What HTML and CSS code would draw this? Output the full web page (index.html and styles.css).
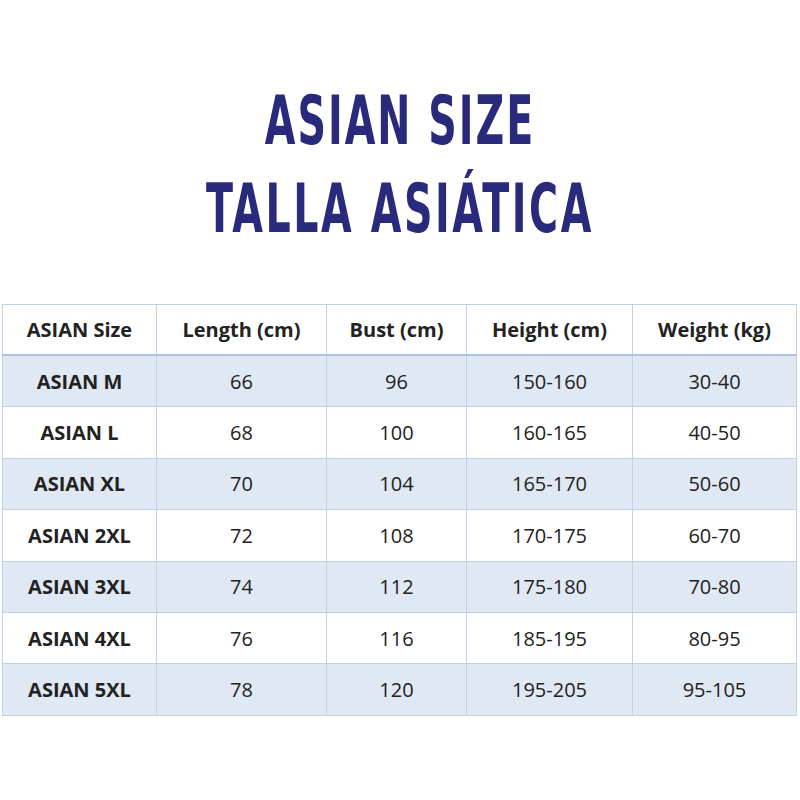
FILE: index.html
```html
<!DOCTYPE html>
<html>
<head>
<meta charset="utf-8">
<link rel="stylesheet" href="styles.css">
</head>
<body>
<div class="page">
  <header class="title">
    <div class="title-line"><span>ASIAN SIZE</span></div>
    <div class="title-line"><span class="wide">TALLA ASIÁTICA</span></div>
  </header>
  <table class="sizes">
    <thead>
      <tr><th>ASIAN Size</th><th>Length (cm)</th><th>Bust (cm)</th><th>Height (cm)</th><th>Weight (kg)</th></tr>
    </thead>
    <tbody>
      <tr class="band"><td class="size">ASIAN M</td><td>66</td><td>96</td><td>150-160</td><td>30-40</td></tr>
      <tr><td class="size">ASIAN L</td><td>68</td><td>100</td><td>160-165</td><td>40-50</td></tr>
      <tr class="band"><td class="size">ASIAN XL</td><td>70</td><td>104</td><td>165-170</td><td>50-60</td></tr>
      <tr><td class="size">ASIAN 2XL</td><td>72</td><td>108</td><td>170-175</td><td>60-70</td></tr>
      <tr class="band"><td class="size">ASIAN 3XL</td><td>74</td><td>112</td><td>175-180</td><td>70-80</td></tr>
      <tr><td class="size">ASIAN 4XL</td><td>76</td><td>116</td><td>185-195</td><td>80-95</td></tr>
      <tr class="band"><td class="size">ASIAN 5XL</td><td>78</td><td>120</td><td>195-205</td><td>95-105</td></tr>
    </tbody>
  </table>
</div>
</body>
</html>
```

FILE: styles.css
```css
html, body {
  margin: 0;
  padding: 0;
  background: #ffffff;
}
.page {
  width: 800px;
  height: 800px;
  padding-top: 87px;
  box-sizing: border-box;
}
.title {
  display: flex;
  flex-direction: column;
  align-items: center;
  margin-bottom: 41px;
}
.title-line {
  height: 88px;
  display: flex;
  align-items: flex-start;
  justify-content: center;
}
.title-line span {
  display: inline-block;
  font-family: "DejaVu Sans Condensed", "DejaVu Sans", sans-serif;
  font-stretch: condensed;
  font-weight: bold;
  font-size: 44px;
  line-height: 44px;
  color: #2a2a7c;
  letter-spacing: 2px;
  transform: scaleY(1.55);
  transform-origin: top center;
}
.title-line span.wide {
  letter-spacing: 2.6px;
}
.sizes {
  margin-left: 2px;
  width: 795px;
  border-collapse: collapse;
  font-family: "Open Sans", sans-serif;
  font-size: 20px;
  color: #222222;
  table-layout: fixed;
}
.sizes th, .sizes td {
  border: 1px solid #bfd2e8;
  text-align: center;
  padding: 0;
  height: 50.4px;
}
.sizes th {
  font-weight: bold;
  height: 49px;
  border-bottom: 2px solid #a9c3e0;
}
.sizes th:nth-child(1) { width: 153px; }
.sizes th:nth-child(2) { width: 169px; }
.sizes th:nth-child(3) { width: 139px; }
.sizes th:nth-child(4) { width: 165px; }
.sizes td.size {
  font-weight: bold;
}
.sizes tr.band td {
  background: #dfe8f3;
}
```
